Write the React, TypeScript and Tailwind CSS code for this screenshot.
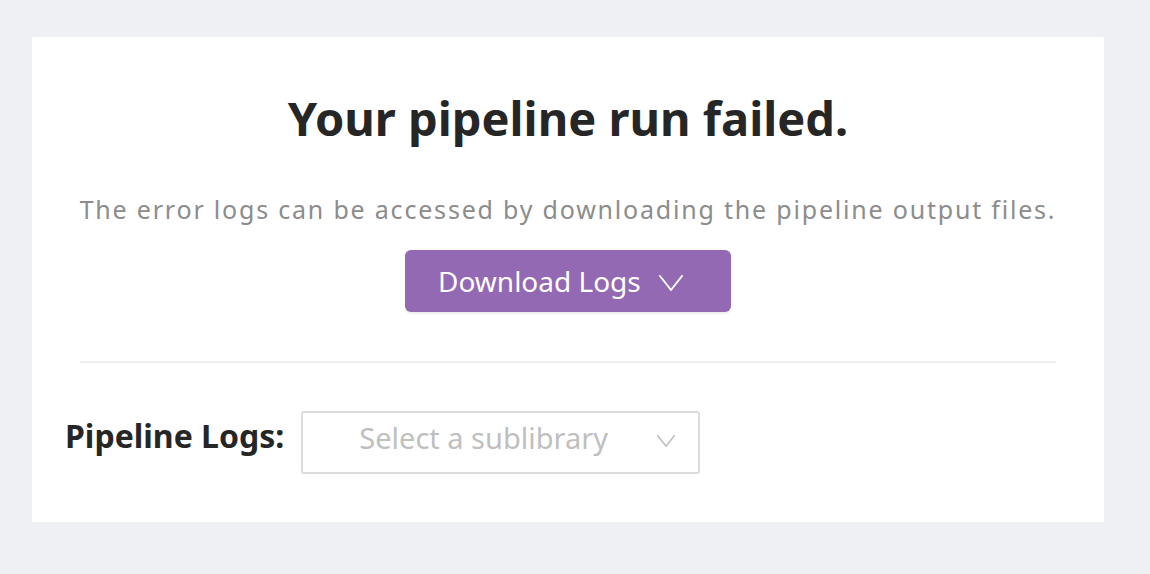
import React from 'react';

const ChevronDown = ({ className, width = 2 }: { className?: string; width?: number }) => (
	<svg viewBox="0 0 24 16" fill="none" className={className} preserveAspectRatio="none">
		<path d="M1 1L12 15L23 1" stroke="currentColor" strokeWidth={width} strokeLinecap="round" strokeLinejoin="round" vectorEffect="non-scaling-stroke" />
	</svg>
);

const App: React.FC = () => {
	return (
		<div className="min-h-screen w-full bg-[#eff0f3] pl-[32px] pr-[46px] pt-[37px] font-['Noto_Sans',sans-serif]">
			<div className="flex h-[485px] w-[1072px] flex-col items-center rounded-[2px] bg-white px-[48px] pt-[49px]">
				{/* title */}
				<h1 className="text-[47px] font-bold leading-[64px] text-[#262626]">
					Your pipeline run failed.
				</h1>

				<p className="mt-[42px] whitespace-nowrap text-[25px] leading-[34px] tracking-[1.8px] text-[#8c8c8c]">
					The error logs can be accessed by downloading the pipeline output files.
				</p>

				{/* download button */}
				<button className="mt-[24px] flex h-[62px] w-[326px] items-center rounded-[6px] bg-[#9369b3] pl-[33px] text-[28px] leading-[38px] text-white shadow-[0_2px_2px_rgba(0,0,0,0.07)]">
					<span>Download Logs</span>
					<ChevronDown className="ml-[18px] mt-[3px] h-[16px] w-[24px]" width={2} />
				</button>

				<div className="mt-[49px] h-[2px] w-full bg-[#efefef]" />

				{/* sublibrary select */}
				<div className="mt-[48px] flex w-full items-center gap-[17px]">
					<span className="-ml-[15px] -mt-[14px] text-[32px] font-bold leading-[42px] text-[#262626]">Pipeline Logs:</span>
					<div className="flex h-[63px] w-[399px] items-center justify-between rounded-[3px] border-2 border-[#dcdcdc] pl-[56px] pr-[23px]">
						<span className="-mt-[10px] text-[29px] leading-[40px] text-[#bfbfbf]">Select a sublibrary</span>
						<ChevronDown className="-mt-[3px] h-[12px] w-[18px] text-[#bfbfbf]" width={1.6} />
					</div>
				</div>
			</div>
		</div>
	);
};

export default App;
